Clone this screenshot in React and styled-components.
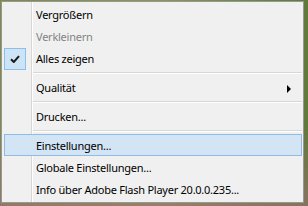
import React from "react";
import styled, { createGlobalStyle } from "styled-components";

const GlobalStyle = createGlobalStyle`
    html, body {
        margin: 0;
        padding: 0;
    }
    body {
        width: 308px;
        height: 206px;
        overflow: hidden;
        font-family: "Noto Sans", "Open Sans", sans-serif;
    }
`;

const items = [
    { label: "Vergrößern" },
    { label: "Verkleinern", disabled: true },
    { label: "Alles zeigen", checked: true },
    { separator: true },
    { label: "Qualität", submenu: true },
    { separator: true },
    { label: "Drucken..." },
    { separator: true },
    { label: "Einstellungen...", active: true },
    { label: "Globale Einstellungen..." },
    { label: "Info über Adobe Flash Player 20.0.0.235..." },
];

function CheckIcon() {
    return (
        <svg width="10" height="8" viewBox="0 0 10 8">
            <path
                d="M1 4.2 L3.8 7 L9 1.2"
                fill="none"
                stroke="#1a1a1a"
                strokeWidth="2"
            />
        </svg>
    );
}

function App() {
    return (
        <Page>
            <GlobalStyle />
            <Menu>
                {items.map((item, i) =>
                    item.separator ? (
                        <Separator key={i} />
                    ) : (
                        <Item key={i} $active={item.active} $disabled={item.disabled}>
                            <IconCell $checked={item.checked}>
                                {item.checked && <CheckIcon />}
                            </IconCell>
                            <Label>{item.label}</Label>
                            <ArrowCell>{item.submenu && <Arrow />}</ArrowCell>
                        </Item>
                    )
                )}
            </Menu>
        </Page>
    );
}

const Page = styled.div`
    width: 308px;
    height: 206px;
    box-sizing: border-box;
    padding: 1px 4px 3px 1px;
    background:
        linear-gradient(180deg, rgba(120, 140, 60, 0) 60%, rgba(160, 110, 120, 0.6) 100%),
        linear-gradient(90deg, #7d8a4a 0%, #8a9a55 50%, #5f7a3a 100%);
`;

const Menu = styled.div`
    width: 303px;
    height: 202px;
    box-sizing: border-box;
    border: 1px solid #979797;
    padding: 1px;
    display: flex;
    flex-direction: column;
    background:
        linear-gradient(
            90deg,
            transparent 29px,
            #d7d7d7 29px,
            #d7d7d7 30px,
            #ffffff 30px,
            #ffffff 31px,
            transparent 31px
        ),
        #f0f0f0;
`;

const Item = styled.div`
    height: 22px;
    box-sizing: border-box;
    margin-left: 1px;
    display: grid;
    grid-template-columns: 32px 1fr 20px;
    align-items: center;
    font-family: "Noto Sans", "Open Sans", sans-serif;
    font-size: 11px;
    letter-spacing: -0.25px;
    color: ${(p) => (p.$disabled ? "#838383" : "#000000")};
    border: 1px solid ${(p) => (p.$active ? "#8fbce6" : "transparent")};
    background: ${(p) => (p.$active ? "#d3e4f5" : "transparent")};
`;

const IconCell = styled.div`
    width: 22px;
    height: 22px;
    box-sizing: border-box;
    margin: -1px 0 0 -1px;
    display: flex;
    align-items: center;
    justify-content: center;
    background: ${(p) => (p.$checked ? "#cde4f7" : "transparent")};
    border: 1px solid ${(p) => (p.$checked ? "#8dbfe8" : "transparent")};
`;

const Label = styled.span`
    margin-left: -1px;
    line-height: 22px;
    white-space: nowrap;
`;

const ArrowCell = styled.div`
    display: flex;
    align-items: center;
    justify-content: flex-start;
    padding-left: 6px;
`;

const Arrow = styled.span`
    width: 0;
    height: 0;
    border-top: 4px solid transparent;
    border-bottom: 4px solid transparent;
    border-left: 4px solid #000;
    margin-top: 1px;
`;

const Separator = styled.div`
    height: 7px;
    margin-left: 30px;
    display: flex;
    align-items: center;
    &::after {
        content: "";
        display: block;
        width: 100%;
        height: 1px;
        background: #d7d7d7;
        box-shadow: 0 1px 0 #ffffff;
        margin-top: -1px;
    }
`;

export default App;
